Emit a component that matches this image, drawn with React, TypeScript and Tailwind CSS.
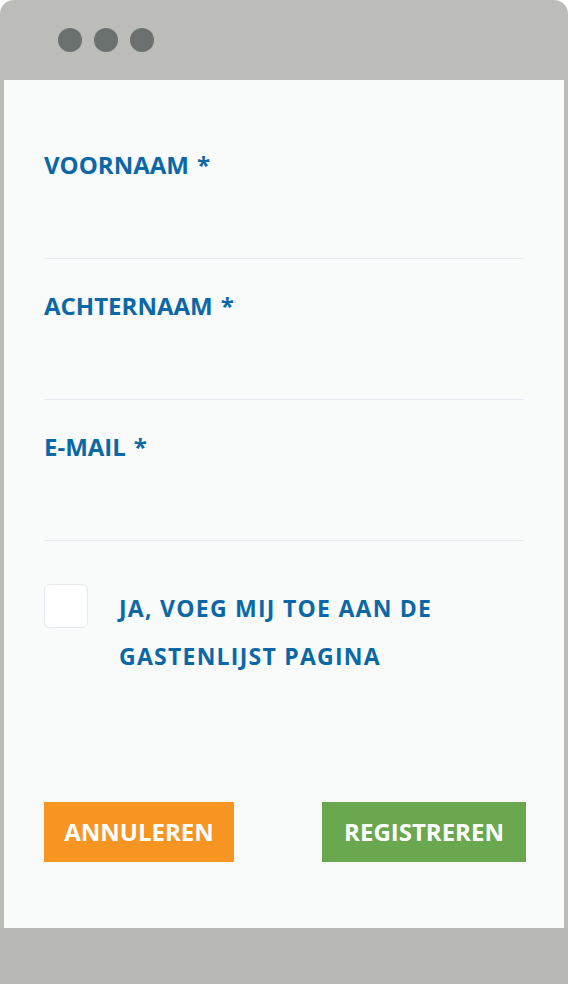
import React from 'react';

const FIELDS = ['VOORNAAM', 'ACHTERNAAM', 'E-MAIL'];

function Field({ label }: { label: string }) {
  return (
    <div className="mt-8 border-b border-[#e6e9ef]">
      <label className="block h-[30px] text-[24px] font-bold leading-[30px] text-[#0b68a6]">
        {label}
        <span className="ml-[8px]">*</span>
      </label>
      <div className="h-[78px]" />
    </div>
  );
}

export default function App() {
  return (
    <div
      className="flex min-h-[984px] w-[568px] flex-col overflow-hidden rounded-t-[14px] bg-[#bcbcb8]"
      style={{ fontFamily: '"Open Sans", "Liberation Sans", sans-serif' }}
    >
      {/* window chrome */}
      <div className="flex h-[80px] items-start gap-3 pl-[58px] pt-[28px]">
        <span className="h-6 w-6 rounded-full bg-[#6b716e]" />
        <span className="h-6 w-6 rounded-full bg-[#6b716e]" />
        <span className="h-6 w-6 rounded-full bg-[#6b716e]" />
      </div>

      <div className="mx-1 h-[848px] bg-[#f9fafa] px-10 pt-[38px]">
        {FIELDS.map((f) => (
          <Field key={f} label={f} />
        ))}

        <div className="mt-[43px] flex items-start gap-[31px]">
          <div className="h-11 w-11 shrink-0 rounded-md border border-[#e5e8ef] bg-white" />
          <p className="text-[23px] font-bold leading-[48px] tracking-[1.25px] text-[#0b68a6]">
            JA, VOEG MIJ TOE AAN DE
            <br />
            GASTENLIJST PAGINA
          </p>
        </div>

        <div className="mt-[122px] flex items-start justify-between">
          <button className="h-[60px] w-[190px] bg-[#f69521] text-[24px] font-bold text-white">
            ANNULEREN
          </button>
          <button className="-mr-[2px] h-[60px] w-[204px] bg-[#69a84f] text-[24px] font-bold text-white">
            REGISTREREN
          </button>
        </div>
      </div>

      <div className="flex-1 bg-[#b9b9b7]" />
    </div>
  );
}
